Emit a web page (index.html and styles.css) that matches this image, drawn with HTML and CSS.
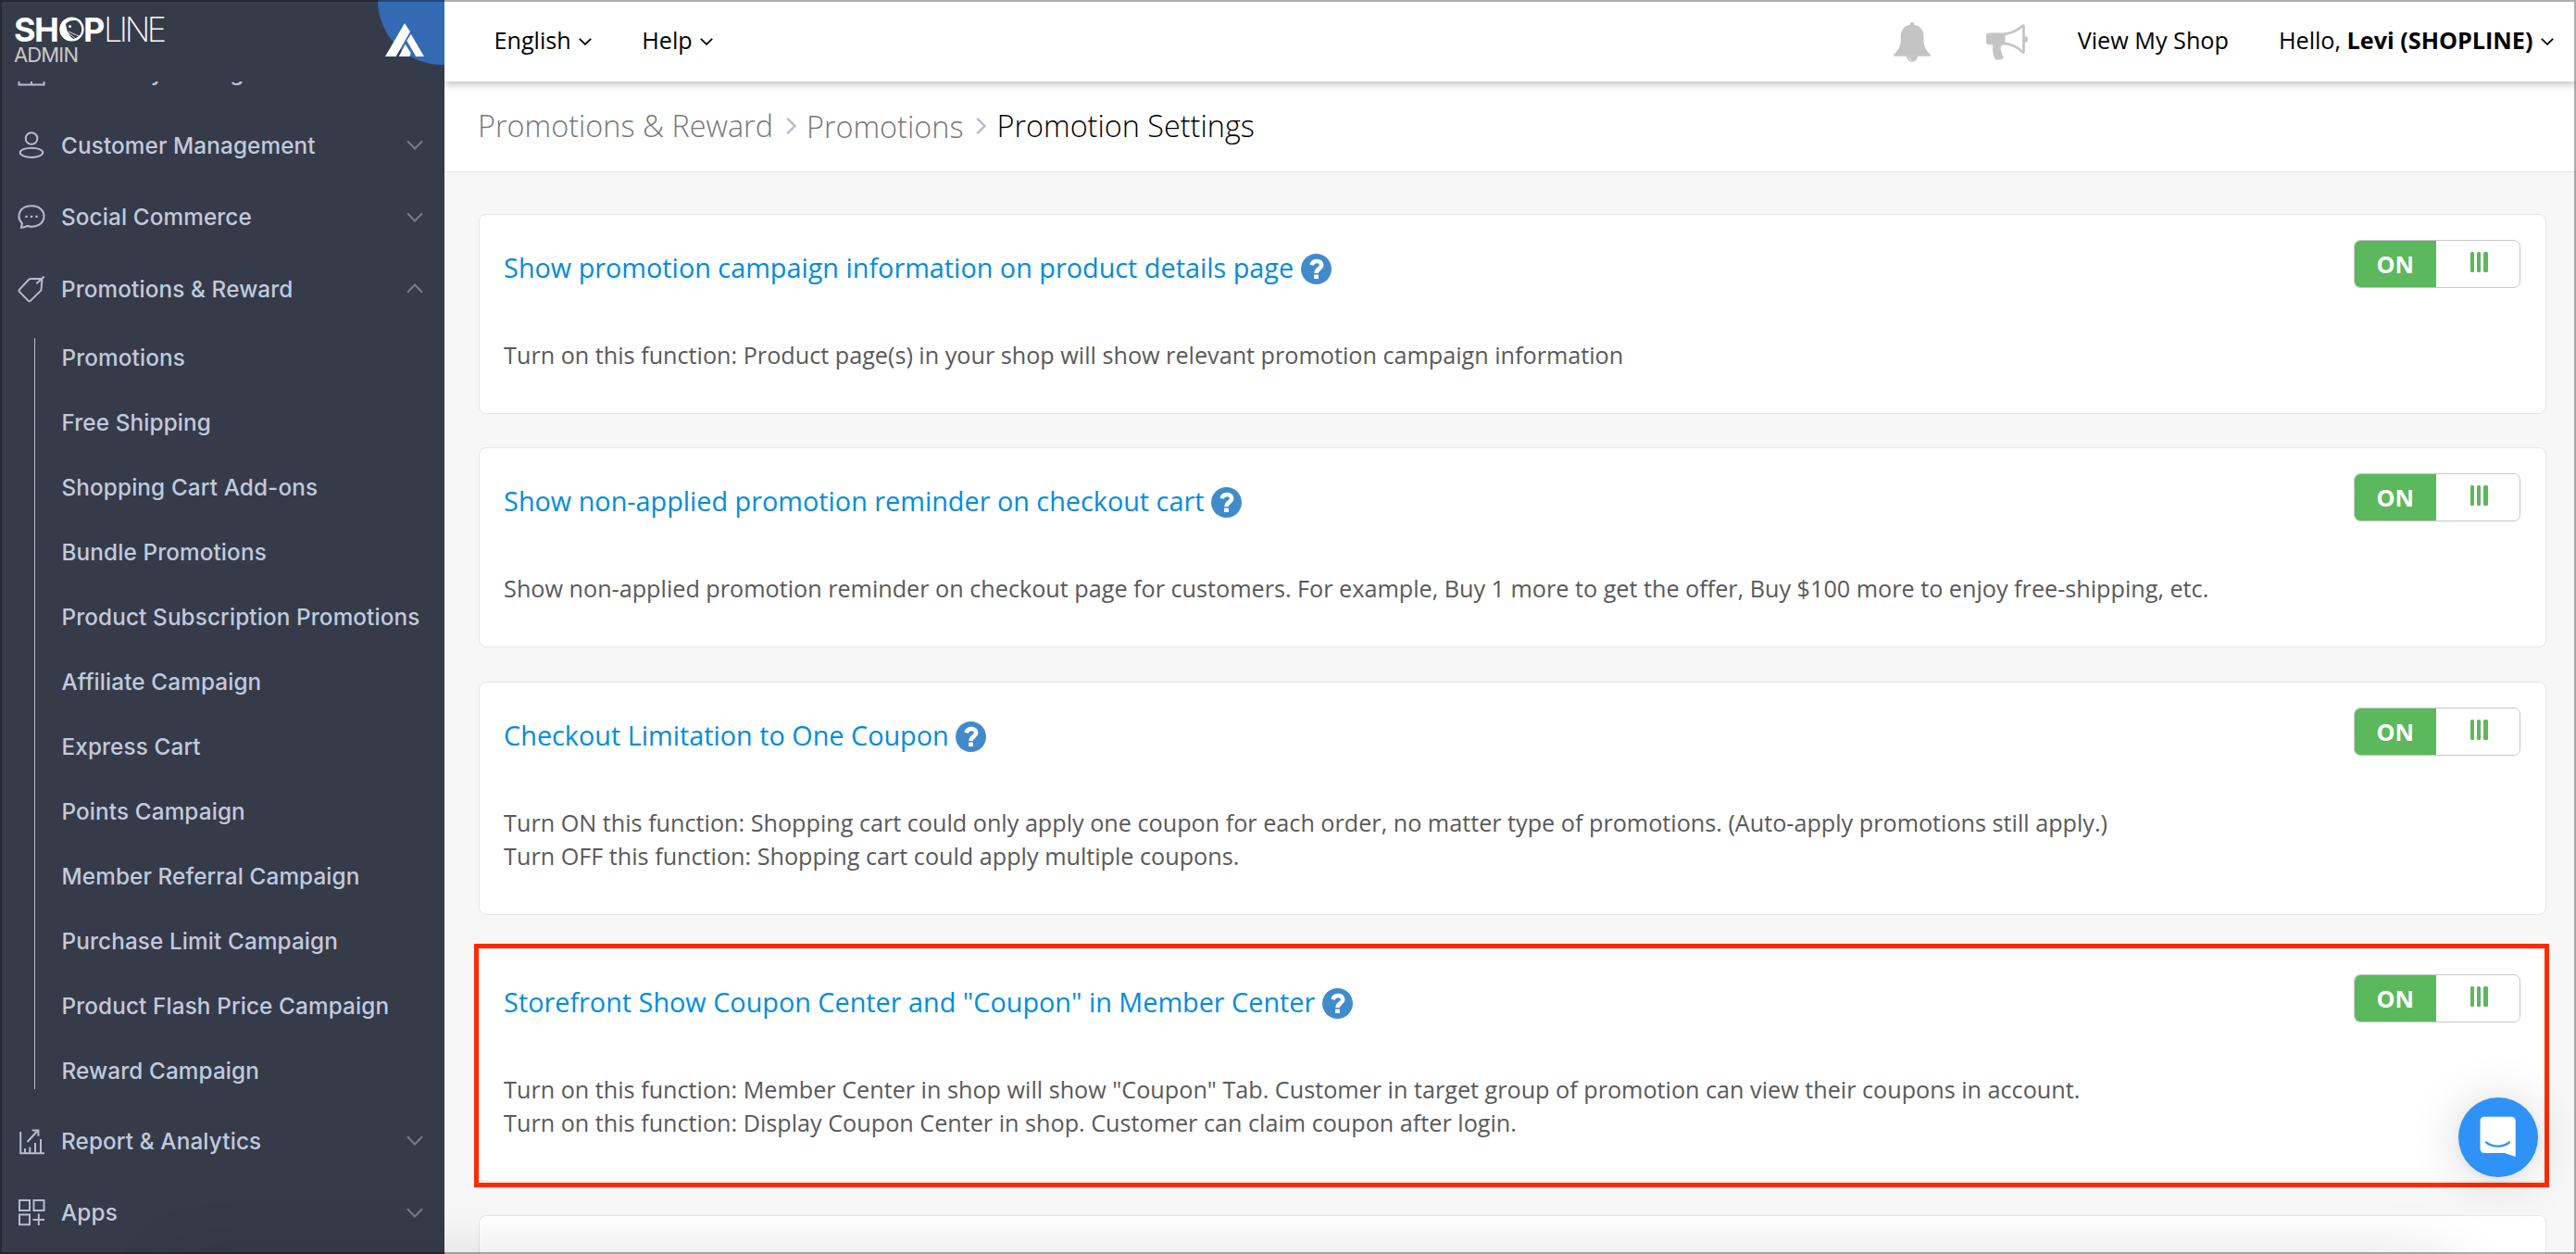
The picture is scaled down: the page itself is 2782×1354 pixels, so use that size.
FILE: index.html
```html
<!DOCTYPE html>
<html lang="en">
  <head>
    <meta charset="UTF-8">
    <meta name="viewport" content="width=device-width, initial-scale=1">
    <title>Promotion Settings - SHOPLINE Admin</title>
    <link rel="stylesheet" href="styles.css">
  </head>
  <body>
    <!-- shared icons -->
    <svg class="defs" width="0" height="0">
      <symbol id="chevron" viewBox="0 0 18 11"><path d="M1 1.2l8 8.3 8-8.3" /></symbol>
      <symbol id="caret" viewBox="0 0 14 8"><path d="M.8.8L7 6.8 13.2.8" /></symbol>
      <symbol id="help" viewBox="0 0 33 33">
        <circle cx="16.5" cy="16.5" r="16.5" fill="#428bca" />
        <path d="M11.6 12.2C13 6.6 22.2 6.8 22.2 12.2c0 4-5.6 4-5.6 8.8" fill="none" stroke="#fff" stroke-width="4.6" />
        <path d="M14.1 22.6h4.8v4.4h-4.8z" fill="#fff" />
      </symbol>
    </svg>

    <div class="app">
      <aside class="sidebar">
        <div class="brand">
          <svg class="brand-logo" width="164" height="52" viewBox="0 0 164 52">
            <text class="logo-bold" x="-1" y="26.5" textLength="49">SH</text>
            <circle cx="61.5" cy="13.5" r="11.9" fill="none" stroke="#fff" stroke-width="2.4" />
            <path d="M60 1.5c-14 1-15 20-3 23.8 3 .9 7 .5 8-.3C58 21 56 15 55 8c3-4 8-5 17-3C69 2 65 1 60 1.5z" fill="#fff" />
            <circle cx="59.5" cy="10.6" r="1.5" fill="#fff" />
            <path d="M57 17l9 7M57 19.5l5 5M58 16l11 5" stroke="#fff" stroke-width=".8" />
            <text class="logo-bold" x="74" y="26.5" textLength="24">P</text>
            <text class="logo-thin" x="96" y="26.5" textLength="68">LINE</text>
            <text class="logo-sub" x="-1" y="49" textLength="70">ADMIN</text>
          </svg>
          <div class="brand-corner">
            <svg width="42" height="36" viewBox="0 0 42 36" fill="#fff">
              <path d="M21 0l5.9 9.2L11.7 36H0z" />
              <path d="M27.8 11.7L42 36h-8.8l-9.9-17z" />
              <path d="M21.7 22.7l6 9.3-1.2 4H14.7z" />
            </svg>
          </div>
        </div>
        <nav class="menu">
          <a class="menu-item menu-item-cut">
            <svg class="menu-icon" viewBox="0 0 30 30"><path d="M1.5 8h27v20.5h-27zM15 8v20.5" /></svg>
            <span>Inventory Management</span>
          </a>
          <a class="menu-item">
            <svg class="menu-icon" viewBox="0 0 30 30"><circle cx="15" cy="7.5" r="6.3" /><ellipse cx="15" cy="22.8" rx="12.3" ry="5.1" /></svg>
            <span>Customer Management</span>
            <svg class="chevron"><use href="#chevron" /></svg>
          </a>
          <a class="menu-item">
            <svg class="menu-icon" viewBox="0 0 30 30">
              <path d="M3.9 26.8l1-4.6C-1.8 15.5 1.5 3.2 15 3.2c9 0 13.5 5.5 13.5 11.2 0 8.5-9.5 13.3-17.8 10.6-2 .9-4.3 1.7-6.8 1.8z" />
              <path class="dots" d="M8.4 13.8h2.3v2.3H8.4zM13.9 13.8h2.3v2.3h-2.3zM19.4 13.8h2.3v2.3h-2.3z" />
            </svg>
            <span>Social Commerce</span>
            <svg class="chevron"><use href="#chevron" /></svg>
          </a>
          <a class="menu-item">
            <svg class="menu-icon" viewBox="0 0 30 30"><path d="M2 15.6L12 5c.6-.6 1.3-1 2.2-1l12.3-.3-.9 11.5c-.1.8-.4 1.3-.9 1.9L14 27.6c-.8.8-1.7.8-2.5 0l-9.4-9.5c-.8-.8-.8-1.7-.1-2.5zM20.3 9.3l8.4-7.8" /></svg>
            <span>Promotions &amp; Reward</span>
            <svg class="chevron chevron-up"><use href="#chevron" /></svg>
          </a>
          <ul class="submenu">
            <li>Promotions</li>
            <li>Free Shipping</li>
            <li>Shopping Cart Add-ons</li>
            <li>Bundle Promotions</li>
            <li>Product Subscription Promotions</li>
            <li>Affiliate Campaign</li>
            <li>Express Cart</li>
            <li>Points Campaign</li>
            <li>Member Referral Campaign</li>
            <li>Purchase Limit Campaign</li>
            <li>Product Flash Price Campaign</li>
            <li>Reward Campaign</li>
          </ul>
          <a class="menu-item">
            <svg class="menu-icon" viewBox="0 0 30 30"><path d="M3.2 5v23.2H29M8 28v-5M13.3 28v-6.5M19 28V17M25 28V13M10.5 16L22 3.5M15.7 3.4h6.7v6.4" /></svg>
            <span>Report &amp; Analytics</span>
            <svg class="chevron"><use href="#chevron" /></svg>
          </a>
          <a class="menu-item">
            <svg class="menu-icon" viewBox="0 0 30 30"><path d="M2 2h11v11H2zM17.5 2h11v11h-11zM2 17.5h11v10.8H2zM16.5 23H29M22.8 16.5V29" /></svg>
            <span>Apps</span>
            <svg class="chevron"><use href="#chevron" /></svg>
          </a>
        </nav>
      </aside>

      <div class="main">
        <header class="topbar">
          <a class="top-link"><span>English</span> <svg class="caret"><use href="#caret" /></svg></a>
          <a class="top-link"><span>Help</span> <svg class="caret"><use href="#caret" /></svg></a>
          <div class="space"></div>
          <svg class="bell" width="40" height="43" viewBox="0 0 40 43" fill="#c4c4c4">
            <path d="M20 0c1.6 0 2.3 1.1 2.3 2.8C29 4 32.5 9 32.5 16v4c0 6.5 3.3 11 7 14.6.9 1.2.2 2.2-1.2 2.2H1.7C.3 36.8-.4 35.8.5 34.6 4.2 31 7.8 26.5 7.8 20v-4c0-7 3.2-12 9.9-13.2C17.7 1.1 18.4 0 20 0z" />
            <path d="M14 36.5a6 6.2 0 0 0 12 0z" />
            <path d="M16.3 38c.4 1.7 1.5 2.7 3 3" fill="none" stroke="#fff" stroke-width=".9" />
          </svg>
          <svg class="megaphone" width="45" height="39" viewBox="0 0 45 39" fill="#c4c4c4">
            <path d="M3 9.5h17.5v12.7H3a3 3 0 0 1-3-3v-6.7a3 3 0 0 1 3-3z" />
            <path d="M7 22h12c-4 1.5-4 4.5-2.5 8 .7 3 1.2 4.5 2.5 6-1.5 2.6-6.5 3-9 2.2C7 34 7 28 7 22z" />
            <path d="M19 10.8C28 10.5 34 6.5 39.5 1.8c.6-.4 1-.2 1 .5v27.4c0 .8-.4 1-1 .5C34 25 28 21.3 19 20.8" fill="none" stroke="#c4c4c4" stroke-width="2.7" />
            <path d="M41.5 13c5 .5 5 6.5 0 7z" />
          </svg>
          <a class="top-link">View My Shop</a>
          <a class="top-link">Hello, <b>Levi (SHOPLINE)</b> <svg class="caret"><use href="#caret" /></svg></a>
        </header>

        <div class="breadcrumb">
          <span>Promotions &amp; Reward</span>
          <svg class="sep" viewBox="0 0 11 18"><path d="M1.2.8L9.5 9l-8.3 8.2" /></svg>
          <span class="crumb-link">Promotions</span>
          <svg class="sep" viewBox="0 0 11 18"><path d="M1.2.8L9.5 9l-8.3 8.2" /></svg>
          <span class="current">Promotion Settings</span>
        </div>

        <main class="cards">
          <section class="card">
            <div class="card-body">
              <h2>Show promotion campaign information on product details page <svg class="help"><use href="#help" /></svg></h2>
              <p>Turn on this function: Product page(s) in your shop will show relevant promotion campaign information</p>
            </div>
            <div class="switch"><span class="switch-on">ON</span><span class="switch-handle"><i></i><i></i><i></i></span></div>
          </section>

          <section class="card">
            <div class="card-body">
              <h2>Show non-applied promotion reminder on checkout cart <svg class="help"><use href="#help" /></svg></h2>
              <p>Show non-applied promotion reminder on checkout page for customers. For example, Buy 1 more to get the offer, Buy $100 more to enjoy free-shipping, etc.</p>
            </div>
            <div class="switch"><span class="switch-on">ON</span><span class="switch-handle"><i></i><i></i><i></i></span></div>
          </section>

          <section class="card">
            <div class="card-body">
              <h2>Checkout Limitation to One Coupon <svg class="help"><use href="#help" /></svg></h2>
              <p>Turn ON this function: Shopping cart could only apply one coupon for each order, no matter type of promotions. (Auto-apply promotions still apply.)<br>
              Turn OFF this function: Shopping cart could apply multiple coupons.</p>
            </div>
            <div class="switch"><span class="switch-on">ON</span><span class="switch-handle"><i></i><i></i><i></i></span></div>
          </section>

          <section class="card highlighted">
            <div class="card-body">
              <h2>Storefront Show Coupon Center and "Coupon" in Member Center <svg class="help"><use href="#help" /></svg></h2>
              <p>Turn on this function: Member Center in shop will show "Coupon" Tab. Customer in target group of promotion can view their coupons in account.<br>
              Turn on this function: Display Coupon Center in shop. Customer can claim coupon after login.</p>
            </div>
            <div class="switch"><span class="switch-on">ON</span><span class="switch-handle"><i></i><i></i><i></i></span></div>
          </section>

          <section class="card card-next"></section>
        </main>
      </div>
    </div>

    <div class="bottom-shade"></div>
    <div class="launcher">
      <svg width="86" height="86" viewBox="0 0 86 86">
        <path d="M28 20.7h29.2a4.5 4.5 0 0 1 4.5 4.5V64l-12-4H28a4.5 4.5 0 0 1-4.5-4.5V25.2a4.5 4.5 0 0 1 4.5-4.5z" fill="#fff" />
        <path d="M30 48.5c7.5 5.5 17.5 5.5 25 0" fill="none" stroke="#2f92f7" stroke-width="2.2" stroke-linecap="round" />
      </svg>
    </div>
    <div class="frame"></div>
  </body>
</html>
```

FILE: styles.css
```css
* {
  box-sizing: border-box;
}
body {
  background: #f7f7f7;
  color: #595959;
  font-family: "Open Sans", sans-serif;
  font-size: 25.2px;
  height: 100vh;
  line-height: 36px;
  margin: 0;
  overflow: hidden;
}
h2, p, ul {
  margin: 0;
  padding: 0;
}
svg {
  display: block;
  flex: none;
}
.defs {
  position: absolute;
}
.app {
  display: flex;
  height: 100vh;
}
.space {
  flex-grow: 1;
}

/* sidebar */
.sidebar {
  background: #363b4a;
  color: #c0cadc;
  display: flex;
  flex: none;
  flex-direction: column;
  font-family: Inter, sans-serif;
  font-size: 24.3px;
  font-weight: 450;
  letter-spacing: .12px;
  position: relative;
  width: 480px;
  z-index: 2;
}
.brand {
  display: flex;
  flex: none;
  height: 88px;
  justify-content: space-between;
}
.brand-logo {
  letter-spacing: 0;
  margin: 18px 0 0 16px;
  overflow: visible;
}
.logo-bold {
  fill: #fff;
  font: 700 36px Inter, sans-serif;
}
.logo-thin {
  fill: #fff;
  font: 200 36px Inter, sans-serif;
}
.logo-sub {
  fill: #c9c9c9;
  font: 400 22px Inter, sans-serif;
}
.brand-corner {
  background: #336ab3;
  border-bottom-left-radius: 71px;
  height: 70px;
  width: 72px;
}
.brand-corner svg {
  margin: 25px 0 0 8px;
}
.menu {
  flex: 1;
  overflow: hidden;
}
.menu-item {
  align-items: center;
  display: flex;
  gap: 17px;
  height: 77.5px;
  padding: 0 23px 0 19px;
}
.menu-item-cut {
  margin: -48.5px 0 1px;
}
.menu-item span {
  flex: 1;
}
.menu-icon {
  fill: none;
  height: 30px;
  stroke: #b4bdd0;
  stroke-width: 2;
  width: 30px;
}
.menu-icon .dots {
  fill: #b4bdd0;
  stroke: none;
}
.chevron {
  fill: none;
  height: 11px;
  stroke: #747c92;
  stroke-width: 2;
  width: 18px;
}
.chevron-up {
  transform: rotate(180deg);
}
.submenu {
  background: linear-gradient(#b4bdd0, #b4bdd0) 37px 14px / 1px 811px no-repeat;
  list-style: none;
  margin: .5px 0 2px;
  padding-left: 66.5px;
}
.submenu li {
  line-height: 70px;
  white-space: nowrap;
}

/* top bar */
.main {
  display: flex;
  flex: 1;
  flex-direction: column;
  min-width: 0;
}
.topbar {
  align-items: center;
  background: #fff;
  box-shadow: 0 2px 9px rgba(0, 0, 0, .3);
  color: #000;
  display: flex;
  flex: none;
  height: 88px;
  padding: 0 24px 2px 53.5px;
  position: relative;
  z-index: 1;
}
.top-link {
  align-items: center;
  display: flex;
  white-space: pre;
}
.top-link + .top-link {
  margin-left: 54px;
}
.caret {
  fill: none;
  height: 8px;
  margin: 3px 0 0 8.5px;
  stroke: #000;
  stroke-width: 1.8;
  width: 14px;
}
.bell {
  margin: 4px 59.5px 0 0;
}
.megaphone {
  margin: 5px 54px 0 0;
}
.breadcrumb {
  align-items: center;
  background: #fff;
  border-bottom: 1px solid #e5e5e5;
  color: #777;
  display: flex;
  flex: none;
  font-size: 32.4px;
  font-weight: 300;
  height: 98px;
  padding: 0 0 4px 36px;
}
.crumb-link {
  padding-top: 2px;
}
.current {
  color: #000;
}
.sep {
  fill: none;
  height: 18px;
  margin: 3px 11px 0 14px;
  stroke: #b4bdd0;
  stroke-width: 2.4;
  width: 11px;
}

/* settings */
.cards {
  display: flex;
  flex: 1;
  flex-direction: column;
  gap: 36.3px;
  min-height: 0;
  overflow: hidden;
  padding: 45px 32.3px 0 36.5px;
}
.card {
  align-items: flex-start;
  background: #fff;
  border: 1px solid #e6e6e6;
  border-radius: 8px;
  display: flex;
  flex: none;
  justify-content: space-between;
  padding: 27px 27px 45px 26.6px;
  position: relative;
}
.card h2 {
  align-items: center;
  color: #008cdd;
  display: flex;
  font-size: 28.8px;
  font-weight: normal;
  line-height: 40px;
  margin: 10px 0 56px;
}
.help {
  height: 33px;
  margin: 3px 0 0 7.5px;
  width: 33px;
}
.card-next {
  height: 216px;
}
.highlighted::after {
  border: 5px solid #ff2a00;
  content: "";
  inset: -6px -4px -7px -6px;
  pointer-events: none;
  position: absolute;
}
.switch {
  border: 1px solid #c8c8c8;
  border-radius: 7px;
  display: flex;
  flex: none;
  height: 52px;
  overflow: hidden;
  width: 180px;
}
.switch-on {
  background: #5cb85c;
  color: #fff;
  font-weight: 700;
  line-height: 50px;
  text-align: center;
  width: 88px;
}
.switch-handle {
  display: flex;
  flex: 1;
  gap: 2.8px;
  justify-content: center;
  padding: 12px 0 0 3px;
}
.switch-handle i {
  background: #5cb85c;
  border-radius: 1.5px;
  height: 22px;
  width: 4.5px;
}

/* overlays */
.bottom-shade {
  border-radius: 60px;
  bottom: -70px;
  box-shadow: 0 0 70px rgba(0, 0, 0, .16);
  height: 60px;
  left: 180px;
  position: absolute;
  right: 130px;
  z-index: 3;
}
.launcher {
  background: #2f92f7;
  border-radius: 50%;
  bottom: 83px;
  box-shadow: 0 2px 10px rgba(0, 0, 0, .06), 0 4px 56px rgba(0, 0, 0, .16);
  height: 86px;
  position: absolute;
  right: 41px;
  width: 86px;
  z-index: 4;
}
.frame {
  border: 2px solid rgba(0, 0, 0, .32);
  inset: 0;
  pointer-events: none;
  position: absolute;
  z-index: 5;
}
```
